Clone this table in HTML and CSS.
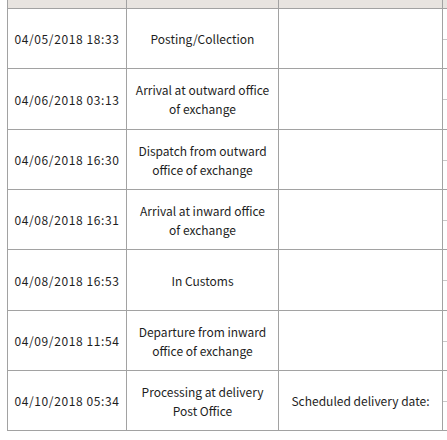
FILE: index.html
```html
<!DOCTYPE html>
<html>
<head>
<meta charset="utf-8">
<link rel="stylesheet" href="styles.css">
</head>
<body>
<div class="wrap">
<table class="track">
  <colgroup>
    <col class="c1"><col class="c2"><col class="c3"><col class="c4">
  </colgroup>
  <tr class="head"><th class="first"></th><th></th><th></th><th class="edge"></th></tr>
  <tr><td class="first date">04/05/2018 18:33</td><td>Posting/Collection</td><td></td><td class="edge"><div class="tick"></div></td></tr>
  <tr class="tall"><td class="first date">04/06/2018 03:13</td><td>Arrival at outward office<br>of exchange</td><td></td><td class="edge"><div class="tick"></div></td></tr>
  <tr><td class="first date">04/06/2018 16:30</td><td>Dispatch from outward<br>office of exchange</td><td></td><td class="edge"><div class="tick"></div></td></tr>
  <tr><td class="first date">04/08/2018 16:31</td><td>Arrival at inward office<br>of exchange</td><td></td><td class="edge"><div class="tick"></div></td></tr>
  <tr class="tall"><td class="first date">04/08/2018 16:53</td><td>In Customs</td><td></td><td class="edge"><div class="tick"></div></td></tr>
  <tr><td class="first date">04/09/2018 11:54</td><td>Departure from inward<br>office of exchange</td><td></td><td class="edge"><div class="tick"></div></td></tr>
  <tr><td class="first date">04/10/2018 05:34</td><td>Processing at delivery<br>Post Office</td><td>Scheduled delivery date:</td><td class="edge"><div class="tick"></div></td></tr>
</table>
</div>
</body>
</html>
```

FILE: styles.css
```css
html, body {
  margin: 0;
  padding: 0;
  background: #ffffff;
  overflow: hidden;
}
.wrap {
  padding-left: 7px;
  width: 460px;
}
.track {
  border-collapse: separate;
  border-spacing: 0;
  table-layout: fixed;
  width: 451px;
  font-family: "Noto Sans CJK JP", "Liberation Sans", sans-serif;
  font-size: 12px;
  color: #1e1e1e;
}
.c1 { width: 120px; }
.c2 { width: 152px; }
.c3 { width: 164px; }
.c4 { width: 15px; }
.track th, .track td {
  box-sizing: border-box;
  border-right: 1px solid #a2a2a2;
  border-bottom: 1px solid #a2a2a2;
  padding: 0 4px;
  text-align: center;
  vertical-align: middle;
  line-height: 19px;
  font-weight: normal;
}
.track .first {
  border-left: 1px solid #a2a2a2;
}
.track td.date {
  letter-spacing: 0.6px;
  padding: 0;
}
.head th {
  height: 9px;
  line-height: 8px;
  font-size: 1px;
  background: #e8e4e0;
}
.track td {
  height: 60px;
}
.tall td {
  height: 61px;
}
.track td.edge, .track th.edge {
  padding: 0;
  border-right: 1px solid #c8c8c8;
  vertical-align: top;
}
.tick {
  height: 30px;
  border-bottom: 1px solid #c8c8c8;
}
```
